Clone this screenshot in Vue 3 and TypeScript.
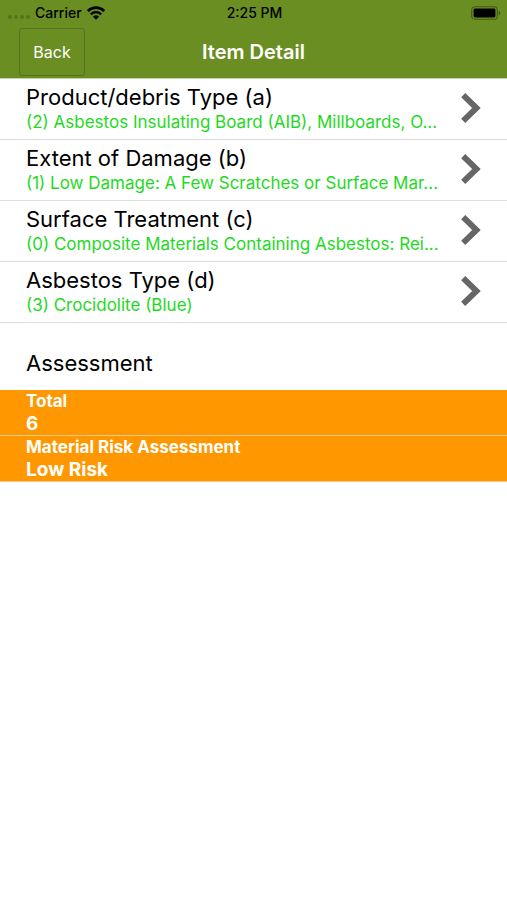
<script setup lang="ts">
interface DetailItem {
  title: string
  value: string
}

interface Result {
  label: string
  value: string
}

const items: DetailItem[] = [
  { title: 'Product/debris Type (a)', value: '(2) Asbestos Insulating Board (AIB), Millboards, O...' },
  { title: 'Extent of Damage (b)', value: '(1) Low Damage: A Few Scratches or Surface Mar...' },
  { title: 'Surface Treatment (c)', value: '(0) Composite Materials Containing Asbestos: Rei...' },
  { title: 'Asbestos Type (d)', value: '(3) Crocidolite (Blue)' },
]

const results: Result[] = [
  { label: 'Total', value: '6' },
  { label: 'Material Risk Assessment', value: 'Low Risk' },
]
</script>

<template>
  <div class="screen">
    <header class="header">
      <div class="status">
        <div class="carrier">
          <span class="signal"><i v-for="n in 4" :key="n"></i></span>
          <span>Carrier</span>
          <svg class="wifi" width="18" height="14" viewBox="0 0 18 14" aria-hidden="true">
            <path d="M0.8 5.1A11.5 11.5 0 0 1 17.2 5.1" fill="none" stroke="#000" stroke-width="2.6" />
            <path d="M3.8 8.3A7.4 7.4 0 0 1 14.2 8.3" fill="none" stroke="#000" stroke-width="2.4" />
            <path d="M9 13.8L6 10.8A4.3 4.3 0 0 1 12 10.8Z" fill="#000" />
          </svg>
        </div>
        <span class="time">2:25 PM</span>
        <svg class="battery" width="30" height="14" viewBox="0 0 30 14" aria-hidden="true">
          <rect x="0.7" y="0.7" width="25.6" height="12.6" rx="3.4" fill="none" stroke="#42591a" stroke-width="1.1" />
          <rect x="2.6" y="2.6" width="21.8" height="8.8" rx="1.4" fill="#000" />
          <path d="M27.8 4.8Q29.4 5.6 29.4 7T27.8 9.2Z" fill="#42591a" />
        </svg>
      </div>
      <nav class="bar">
        <button type="button" class="back">Back</button>
        <h1 class="heading">Item Detail</h1>
      </nav>
    </header>

    <main>
      <ul class="list">
        <li v-for="item in items" :key="item.title">
          <button type="button" class="row">
            <span class="copy">
              <span class="title">{{ item.title }}</span>
              <span class="value">{{ item.value }}</span>
            </span>
            <svg class="chevron" width="20" height="30" viewBox="0 0 20 30" aria-hidden="true">
              <path d="M2.2 2.2L15.5 15L2.2 27.8" fill="none" stroke="#666" stroke-width="5.9" />
            </svg>
          </button>
        </li>
      </ul>

      <h2 class="section">Assessment</h2>
      <dl class="results">
        <div v-for="result in results" :key="result.label" class="result">
          <dt>{{ result.label }}</dt>
          <dd>{{ result.value }}</dd>
        </div>
      </dl>
    </main>
  </div>
</template>

<style>
body {
  margin: 0;
  background: #fff;
}
</style>

<style scoped>
.screen {
  min-height: 100vh;
  background: #fff;
  color: #000;
  font-family: Inter, "Liberation Sans", sans-serif;
}

.header {
  background: #6b8e23;
  border-bottom: 1px solid #c5d3a7;
}

.status {
  display: grid;
  grid-template-columns: 1fr auto 1fr;
  align-items: center;
  height: 26px;
  padding: 0 6px 0 8px;
  font-size: 14px;
  font-weight: 500;
  line-height: 16px;
}

.carrier {
  display: flex;
  align-items: center;
  gap: 5px;
}

.signal {
  display: flex;
  gap: 2px;
  padding-top: 8px;
}

.signal i {
  width: 4px;
  height: 4px;
  border-radius: 50%;
  background: #56731c;
}

.battery {
  justify-self: end;
}

.bar {
  display: grid;
  grid-template-columns: 1fr auto 1fr;
  align-items: center;
  height: 52px;
  padding: 0 19px;
}

.back {
  justify-self: start;
  width: 66px;
  height: 48px;
  padding: 0;
  border: 1px solid #567320;
  border-radius: 3px;
  background: transparent;
  color: #fff;
  font: inherit;
  font-size: 16px;
}

.heading {
  margin: 0;
  color: #fff;
  font-size: 20px;
  font-weight: 600;
}

.list {
  margin: 0;
  padding: 0;
  list-style: none;
}

.row {
  display: flex;
  align-items: center;
  justify-content: space-between;
  width: 100%;
  height: 61px;
  padding: 0 26px;
  border: 0;
  border-bottom: 1px solid #dedede;
  background: #fff;
  color: inherit;
  font: inherit;
  text-align: left;
}

.copy {
  display: flex;
  flex-direction: column;
  min-width: 0;
  padding-bottom: 2px;
}

.title {
  font-size: 22px;
  line-height: 28px;
}

.value {
  color: #1fd91f;
  font-size: 17px;
  line-height: 22px;
  white-space: nowrap;
}

.chevron {
  flex: none;
  margin-top: -2px;
}

.section {
  margin: 0;
  padding: 26px 26px 13px;
  font-size: 22px;
  font-weight: 400;
  line-height: 28px;
}

.results {
  margin: 0;
}

.result {
  padding: 0 26px;
  border-bottom: 1px solid #f3c98a;
  background: #ff9800;
  color: #fff;
  font-weight: 700;
}

.result dt {
  font-size: 17px;
  line-height: 22px;
}

.result dd {
  margin: 0;
  font-size: 19px;
  line-height: 23px;
}
</style>
